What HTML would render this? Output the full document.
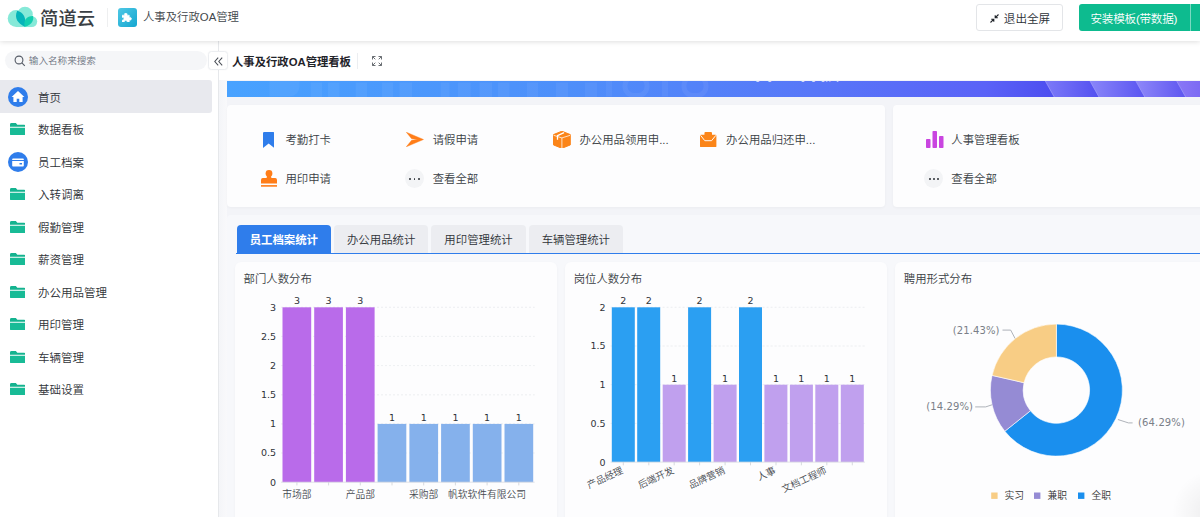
<!DOCTYPE html>
<html lang="zh-CN">
<head>
<meta charset="utf-8">
<title>人事及行政OA管理</title>
<style>
*{box-sizing:border-box;margin:0;padding:0}
html,body{width:1200px;height:517px;overflow:hidden;background:#fff}
body{font-family:"Liberation Sans","Noto Sans CJK SC",sans-serif;color:#333;font-size:11.4px;position:relative;font-weight:350}
.abs{position:absolute}
#header{position:absolute;left:0;top:0;width:1200px;height:41px;background:#fff;box-shadow:0 1px 5px rgba(0,0,0,.13);z-index:10}
#logo-text{position:absolute;left:40px;top:6px;font-size:18.3px;line-height:26px;color:#3a3f45;letter-spacing:.1px;font-weight:500}
#hdiv{position:absolute;left:107px;top:8px;width:1px;height:19px;background:#eeeff0}
#appicon{position:absolute;left:117.500px;top:7.900px;width:19.500px;height:19.500px;border-radius:3px;background:linear-gradient(135deg,#4fc8e5,#14a6d0)}
#apptitle{position:absolute;left:143px;top:8.400px;line-height:19px;font-size:11.375px;color:#41464b}
#btn-exit{position:absolute;left:976px;top:4px;width:87px;height:27px;border:1px solid #e3e5e8;border-radius:3px;background:#fff;font-size:11.6px;line-height:25px;color:#2b2f36}
#btn-exit span{position:absolute;left:26.800px;top:.5px}
#btn-install{position:absolute;left:1079px;top:4px;width:125px;height:27px;border-radius:3px;background:#0dbb8f;color:#fff;font-size:11.6px;line-height:27px}
#btn-install span{position:absolute;left:11.500px;top:.5px;letter-spacing:-.25px}
#btn-install i{position:absolute;left:111px;top:0;width:1px;height:27px;background:rgba(255,255,255,.45)}
#sidebar{position:absolute;left:0;top:41px;width:219px;height:476px;background:#fff;border-right:1px solid #e6e8eb}
#search{position:absolute;left:5px;top:10px;width:202.200px;height:19px;border-radius:10px;background:#f5f6f8}
#search span{position:absolute;left:23.800px;top:0;line-height:19px;font-size:9.6px;color:#6b7280}
#collapse{position:absolute;left:208.400px;top:50.900px;width:19.300px;height:19.500px;border:1px solid #eceef1;border-radius:3.500px;box-shadow:0 0 2px rgba(0,0,0,.04);background:#fff;z-index:5}
.mi{position:absolute;left:0;width:211.5px;height:32.2px;border-radius:0 3px 3px 0}
.mi.sel{background:#e8e9ee}
.mi span{position:absolute;left:38px;top:1.600px;line-height:32.2px;font-size:11.5px;color:#2f3338;white-space:nowrap}
.mi svg{position:absolute}
#main{position:absolute;left:219px;top:41px;width:981px;height:476px;background:#f3f4f8}
#titlebar{position:absolute;left:0;top:0;width:981px;height:39px;background:#fff}
#titlebar b{position:absolute;left:13px;top:11.100px;line-height:20px;font-size:11.33px;color:#1f2329;font-weight:700;white-space:nowrap}
#banner{position:absolute;left:8px;top:39.500px;width:973px;height:16.500px;background:linear-gradient(90deg,#48a2ff 0%,#4e8ffa 35%,#5877f8 60%,#5a62f7 78%,#4e4ff0 84.5%,#4e4ff0 100%);overflow:hidden}
.card{position:absolute;background:#fdfdfe;border-radius:4px;box-shadow:0 1px 3px rgba(0,0,0,.035)}
.ent{position:absolute;font-size:11.4px;line-height:16px;color:#3a3f45;white-space:nowrap}
.ico{position:absolute}
.dots{position:absolute;width:19px;height:19px;border-radius:50%;background:#f3f4f6}
.dots i{position:absolute;top:8.600px;width:1.900px;height:1.900px;border-radius:50%;background:#2b2f36}
#tabwrap{position:absolute;left:8px;top:173.500px;width:980px;height:310px;background:#f7f8fb;border-radius:4px}
.tab{position:absolute;top:10.500px;height:27.500px;width:94.300px;border-radius:4px 4px 0 0;background:#ecedf1;font-size:11.4px;line-height:27px;padding-top:1.900px;text-align:center;color:#2f3338;white-space:nowrap}
.tab.on{background:#2f7deb;color:#fff;font-weight:700}
#tabline{position:absolute;left:9px;top:38px;width:980px;height:1.600px;background:#2f7deb}
.ctitle{position:absolute;left:8.500px;top:9px;font-size:11.4px;line-height:16px;color:#3a3f45;white-space:nowrap}
svg text{font-family:"Liberation Sans","Noto Sans CJK SC",sans-serif}
svg text.num{font-family:"DejaVu Sans","Liberation Sans",sans-serif;font-weight:400}
</style>
</head>
<body>
<div id="header">
  <svg class="abs" style="left:7px;top:6px" width="32" height="22" viewBox="7 6 32 22">
    <circle cx="16.200" cy="18.600" r="8.500" fill="#86e9d8"/>
    <circle cx="25" cy="14.600" r="7.800" fill="#86e9d8"/>
    <circle cx="31.800" cy="21.600" r="5.400" fill="#86e9d8"/>
    <rect x="16.200" y="19" width="15.600" height="8.050" fill="#86e9d8"/>
    <path d="M17.200 10.800C23 12 26.800 17.500 25 26.800C18 23.800 13.800 18.300 17.200 10.800Z" fill="#05b4b9"/>
    <path d="M33.100 16C34.200 21.500 30.300 25.500 24.800 26.800C23 20.500 26.800 15.800 33.100 16Z" fill="#12cfb0"/>
  </svg>
  <div id="logo-text">简道云</div>
  <div id="hdiv"></div>
  <div id="appicon">
    <svg class="abs" style="left:4.900px;top:4.900px" width="9.500" height="9.300" viewBox="1 -0.05 9.85 9.65" preserveAspectRatio="none"><path d="M1 2.200H3.600A1.500 1.500 0 1 1 6.200 2.200H8.600V4.600A1.500 1.500 0 1 1 8.600 7.200V9.600H6.200A1.400 1.400 0 1 0 3.600 9.600H1V7.200A1.400 1.400 0 1 0 1 4.600z" fill="#fff" stroke="#fff" stroke-width=".5" stroke-linejoin="round"/></svg>
  </div>
  <div id="apptitle">人事及行政OA管理</div>
  <div id="btn-exit">
    <svg class="abs" style="left:13px;top:9px" width="9" height="9" viewBox="0 0 9 9"><path d="M8.5 .5 5.4 3.6M5.2 1.2v2.6h2.6M.5 8.500 3.600 5.400M3.800 7.800V5.200H1.200" stroke="#1f2329" stroke-width="1.1" fill="none"/></svg>
    <span>退出全屏</span>
  </div>
  <div id="btn-install"><span>安装模板(带数据)</span><i></i></div>
</div>
<div id="sidebar">
  <div id="search">
    <svg class="abs" style="left:9px;top:4px" width="12" height="12" viewBox="0 0 12 12"><circle cx="5" cy="5" r="3.9" stroke="#555b66" stroke-width="1.1" fill="none"/><path d="M7.900 7.900 10.800 10.800" stroke="#555b66" stroke-width="1.1"/></svg>
    <span>输入名称来搜索</span>
  </div>
  <div class="mi sel" style="top:39.4px"><svg style="left:7.700px;top:6.200px" width="20" height="20" viewBox="0 0 20 20"><circle cx="10" cy="10" r="10" fill="#2f7deb"/><path d="M10 4 3.600 10h1.800v5h3.300v-3.300h2.600V15h3.300V10h1.800z" fill="#fff"/></svg><span>首页</span></div>
  <div class="mi" style="top:71.9px"><svg style="left:9.600px;top:10.200px" width="15.600" height="12.300" viewBox="0 0 16 13" preserveAspectRatio="none"><path d="M0 1.500A1.500 1.500 0 0 1 1.500 0H6l1.500 1.800H14.500A1.500 1.500 0 0 1 16 3.300V4H0z" fill="#14b38f"/><path d="M0 5H16V11.500A1.500 1.500 0 0 1 14.500 13H1.500A1.500 1.500 0 0 1 0 11.500z" fill="#18bb96"/></svg><span>数据看板</span></div>
  <div class="mi" style="top:104.4px"><svg style="left:7.700px;top:6.200px" width="20" height="20" viewBox="0 0 20 20"><circle cx="10" cy="10" r="10" fill="#2f7deb"/><path d="M5 6.500h10a.8.800 0 0 1 .8.800V8H4.200V7.300A.8.800 0 0 1 5 6.500zM4.200 9h11.600v4.700a.8.800 0 0 1-.8.800H5a.8.800 0 0 1-.8-.8zM11.500 11h2.500v1.500h-2.500z" fill="#fff" fill-rule="evenodd"/></svg><span>员工档案</span></div>
  <div class="mi" style="top:136.9px"><svg style="left:9.600px;top:10.200px" width="15.600" height="12.300" viewBox="0 0 16 13" preserveAspectRatio="none"><path d="M0 1.500A1.500 1.500 0 0 1 1.500 0H6l1.500 1.800H14.500A1.500 1.500 0 0 1 16 3.300V4H0z" fill="#14b38f"/><path d="M0 5H16V11.500A1.500 1.500 0 0 1 14.500 13H1.500A1.500 1.500 0 0 1 0 11.500z" fill="#18bb96"/></svg><span>入转调离</span></div>
  <div class="mi" style="top:169.4px"><svg style="left:9.600px;top:10.200px" width="15.600" height="12.300" viewBox="0 0 16 13" preserveAspectRatio="none"><path d="M0 1.500A1.500 1.500 0 0 1 1.500 0H6l1.500 1.800H14.500A1.500 1.500 0 0 1 16 3.300V4H0z" fill="#14b38f"/><path d="M0 5H16V11.500A1.500 1.500 0 0 1 14.500 13H1.500A1.500 1.500 0 0 1 0 11.500z" fill="#18bb96"/></svg><span>假勤管理</span></div>
  <div class="mi" style="top:201.9px"><svg style="left:9.600px;top:10.200px" width="15.600" height="12.300" viewBox="0 0 16 13" preserveAspectRatio="none"><path d="M0 1.500A1.500 1.500 0 0 1 1.500 0H6l1.500 1.800H14.500A1.500 1.500 0 0 1 16 3.300V4H0z" fill="#14b38f"/><path d="M0 5H16V11.500A1.500 1.500 0 0 1 14.500 13H1.500A1.500 1.500 0 0 1 0 11.500z" fill="#18bb96"/></svg><span>薪资管理</span></div>
  <div class="mi" style="top:234.4px"><svg style="left:9.600px;top:10.200px" width="15.600" height="12.300" viewBox="0 0 16 13" preserveAspectRatio="none"><path d="M0 1.500A1.500 1.500 0 0 1 1.500 0H6l1.500 1.800H14.500A1.500 1.500 0 0 1 16 3.300V4H0z" fill="#14b38f"/><path d="M0 5H16V11.500A1.500 1.500 0 0 1 14.500 13H1.500A1.500 1.500 0 0 1 0 11.500z" fill="#18bb96"/></svg><span>办公用品管理</span></div>
  <div class="mi" style="top:266.9px"><svg style="left:9.600px;top:10.200px" width="15.600" height="12.300" viewBox="0 0 16 13" preserveAspectRatio="none"><path d="M0 1.500A1.500 1.500 0 0 1 1.500 0H6l1.500 1.800H14.500A1.500 1.500 0 0 1 16 3.300V4H0z" fill="#14b38f"/><path d="M0 5H16V11.500A1.500 1.500 0 0 1 14.500 13H1.500A1.500 1.500 0 0 1 0 11.500z" fill="#18bb96"/></svg><span>用印管理</span></div>
  <div class="mi" style="top:299.4px"><svg style="left:9.600px;top:10.200px" width="15.600" height="12.300" viewBox="0 0 16 13" preserveAspectRatio="none"><path d="M0 1.500A1.500 1.500 0 0 1 1.500 0H6l1.500 1.800H14.500A1.500 1.500 0 0 1 16 3.300V4H0z" fill="#14b38f"/><path d="M0 5H16V11.500A1.500 1.500 0 0 1 14.500 13H1.500A1.500 1.500 0 0 1 0 11.500z" fill="#18bb96"/></svg><span>车辆管理</span></div>
  <div class="mi" style="top:331.9px"><svg style="left:9.600px;top:10.200px" width="15.600" height="12.300" viewBox="0 0 16 13" preserveAspectRatio="none"><path d="M0 1.500A1.500 1.500 0 0 1 1.500 0H6l1.500 1.800H14.500A1.500 1.500 0 0 1 16 3.300V4H0z" fill="#14b38f"/><path d="M0 5H16V11.500A1.500 1.500 0 0 1 14.500 13H1.500A1.500 1.500 0 0 1 0 11.500z" fill="#18bb96"/></svg><span>基础设置</span></div>
</div>
<div id="collapse"><svg class="abs" style="left:4.600px;top:4.700px" width="9" height="9" viewBox="0 0 9 9"><path d="M4.200 .7 .8 4.500 4.200 8.300M8.200 .7 4.800 4.500 8.200 8.300" stroke="#4a4f57" stroke-width="1.05" fill="none"/></svg></div>
<div id="main">
  <div id="titlebar"><b>人事及行政OA管理看板</b>
    <svg class="abs" style="left:153px;top:15px" width="10" height="10" viewBox="0 0 10 10"><path d="M.5 3.500V.5h3M6.500 .5h3v3M9.500 6.500v3h-3M3.500 9.500h-3v-3M.8.800 3.300 3.300M9.200.8 6.700 3.300M9.200 9.200 6.700 6.700M.8 9.200 3.300 6.700" stroke="#3a3f45" stroke-width=".75" fill="none"/></svg>
    <i class="abs" style="left:138px;top:12.300px;width:1px;height:16px;background:#eceef1"></i>
  </div>
  <div class="abs" style="left:0;top:39px;width:8px;height:437px;background:linear-gradient(90deg,#f4f5f8,#f9f9fb)"></div>
  <div id="banner">
    <svg class="abs" style="left:0;top:0" width="973" height="17" viewBox="227 80.5 973 17">
      <defs>
        <linearGradient id="sg0" x1="0" y1="0" x2="1" y2="0"><stop offset="0" stop-color="#7d7af8"/><stop offset="1" stop-color="#524ff0"/></linearGradient>
        <linearGradient id="sg1" x1="0" y1="0" x2="1" y2="0"><stop offset="0" stop-color="#8a86f9"/><stop offset="1" stop-color="#5954f1"/></linearGradient>
        <linearGradient id="sg2" x1="0" y1="0" x2="1" y2="0"><stop offset="0" stop-color="#8f88f9"/><stop offset="1" stop-color="#5d55f0"/></linearGradient>
        <linearGradient id="sg3" x1="0" y1="0" x2="1" y2="0"><stop offset="0" stop-color="#8a78f6"/><stop offset="1" stop-color="#6a58f0"/></linearGradient>
      </defs>
      <polygon points="1045.3,80.5 1090,80.5 1099.5,97.5 1054.8,97.5" fill="url(#sg0)"/>
      <line x1="1045.3" y1="80.5" x2="1054.8" y2="97.5" stroke="#a9a6fb" stroke-width=".9" opacity=".7"/>
      <polygon points="1090,80.5 1135.8,80.5 1145.3,97.5 1099.5,97.5" fill="url(#sg1)"/>
      <line x1="1090" y1="80.5" x2="1099.5" y2="97.5" stroke="#a9a6fb" stroke-width=".9" opacity=".7"/>
      <polygon points="1135.8,80.5 1176.7,80.5 1186.2,97.5 1145.3,97.5" fill="url(#sg2)"/>
      <line x1="1135.8" y1="80.5" x2="1145.3" y2="97.5" stroke="#a9a6fb" stroke-width=".9" opacity=".7"/>
      <polygon points="1176.7,80.5 1222,80.5 1231.5,97.5 1186.2,97.5" fill="url(#sg3)"/>
      <line x1="1176.7" y1="80.5" x2="1186.2" y2="97.5" stroke="#a9a6fb" stroke-width=".9" opacity=".7"/>
      <rect x="310.7" y="82" width="11.3" height="16" fill="#fff" opacity=".05"/>
      <rect x="328" y="82" width="11.5" height="16" fill="#fff" opacity=".05"/>
      <rect x="355.7" y="82" width="11.3" height="16" fill="#fff" opacity=".05"/>
      <rect x="382" y="82" width="11.0" height="16" fill="#fff" opacity=".05"/>
      <rect x="399.5" y="82" width="12.5" height="16" fill="#fff" opacity=".05"/>
      <rect x="440.7" y="82" width="8.8" height="16" fill="#fff" opacity=".05"/>
      <rect x="458" y="82" width="12.7" height="16" fill="#fff" opacity=".05"/>
      <rect x="479.5" y="82" width="12.5" height="16" fill="#fff" opacity=".05"/>
      <rect x="498" y="82" width="11.5" height="16" fill="#fff" opacity=".05"/>
      <rect x="527" y="82" width="11.0" height="16" fill="#fff" opacity=".05"/>
      <rect x="556" y="82" width="12.0" height="16" fill="#fff" opacity=".05"/>
      <rect x="585" y="82" width="12.0" height="16" fill="#fff" opacity=".05"/>
      <path d="M269.500 80.500H299.500V86A10 10 0 0 1 289.500 96H269.500z" fill="#fff" opacity=".05"/>
      <rect x="625" y="76" width="22" height="19" rx="9" fill="none" stroke="#fff" stroke-width="5" opacity=".06"/>
      <rect x="684" y="76" width="22" height="19" rx="9" fill="none" stroke="#fff" stroke-width="5" opacity=".06"/>
      <rect x="606" y="80" width="6" height="16" fill="#fff" opacity=".05"/>
      <rect x="662" y="80" width="6" height="16" fill="#fff" opacity=".05"/>
    </svg>
    <div class="abs" style="left:525px;top:-19.800px;font-size:22px;line-height:22px;font-weight:700;color:#fff;opacity:.85;white-space:nowrap">管理看板</div>
  </div>
  <div class="card" style="left:8px;top:64px;width:657.500px;height:101.600px">
    <svg class="ico" style="left:36px;top:26.599999999999994px" width="11.300" height="16.400" viewBox="0 0 12 17" preserveAspectRatio="none"><path d="M0 1.200A1.200 1.200 0 0 1 1.200 0h9.600A1.200 1.200 0 0 1 12 1.200V16.500L6 11.800 0 16.500z" fill="#2f7deb"/></svg>
    <div class="ent" style="left:58.4px;top:26.6px">考勤打卡</div>
    <svg class="ico" style="left:178.7px;top:27.399999999999995px" width="18" height="15" viewBox="0 0 18 15"><path d="M.3 .2 17.500 7.500 .3 14.800 5.600 8.300 11.500 7.500 5.600 6.700z" fill="#ff7d18" stroke="#ff7d18" stroke-width=".4" stroke-linejoin="round"/></svg>
    <div class="ent" style="left:205.7px;top:26.6px">请假申请</div>
    <svg class="ico" style="left:325.85px;top:25.80000000000001px" width="17.800" height="17.500" viewBox="0 0 17.800 17.500"><path d="M8.900 .2 17.300 3.600V13.900L8.900 17.300 .5 13.900V3.600z" fill="#fb8519" stroke="#fb8519" stroke-width="1" stroke-linejoin="round"/><path d="M.6 4.300 8.900 6.900 17.200 4.300M8.900 6.900V17.300" stroke="#fff" stroke-width=".75" fill="none"/><path d="M11 1.600 4.500 4.700V8.700" stroke="#fff" stroke-width="1.300" fill="none" stroke-linejoin="round"/></svg>
    <div class="ent" style="left:352.4px;top:26.6px">办公用品领用申...</div>
    <svg class="ico" style="left:473.35px;top:27px" width="16.400" height="15.200" viewBox="0 0 16.400 15.200"><path d="M0 3.800A1 1 0 0 1 1 2.800H4.450V1A1 1 0 0 1 5.450 0H11A1 1 0 0 1 12 1V2.800H15.400A1 1 0 0 1 16.400 3.800V14.200A1 1 0 0 1 15.400 15.200H1A1 1 0 0 1 0 14.200z" fill="#fb8519"/><path d="M.5 3.300 4.800 8.700H11.600L15.900 3.300" stroke="#fff" stroke-width=".95" fill="none" stroke-linejoin="round"/></svg>
    <div class="ent" style="left:499.1px;top:26.6px">办公用品归还申...</div>
    <svg class="ico" style="left:33.5px;top:64.6px" width="16" height="17" viewBox="0 0 16 17"><circle cx="8" cy="3.400" r="3.400" fill="#ff7d18"/><path d="M6.200 5h3.600l.6 3h3.800A2 2 0 0 1 16 10V13.500H0V10A2 2 0 0 1 1.800 8H5.600z" fill="#ff7d18"/><rect x="0" y="15.100" width="16" height="1.600" fill="#ff7d18"/></svg>
    <div class="ent" style="left:58.4px;top:65.6px">用印申请</div>
    <div class="dots" style="left:178px;top:64.1px"><i style="left:4.300px"></i><i style="left:8.600px"></i><i style="left:12.900px"></i></div>
    <div class="ent" style="left:205.7px;top:65.6px">查看全部</div>
  </div>
  <div class="card" style="left:673.700px;top:64px;width:320px;height:101.600px">
    <svg class="ico" style="left:32.89999999999998px;top:25.599999999999994px" width="18" height="17" viewBox="0 0 18 17"><rect x="0" y="8" width="4.500" height="9" rx=".8" fill="#c945e0"/><rect x="6.500" y="0" width="4.500" height="17" rx=".8" fill="#c945e0"/><rect x="13" y="5" width="4.500" height="12" rx=".8" fill="#c945e0"/></svg>
    <div class="ent" style="left:58.6px;top:26.6px">人事管理看板</div>
    <div class="dots" style="left:31.799999999999955px;top:64.1px"><i style="left:4.300px"></i><i style="left:8.600px"></i><i style="left:12.900px"></i></div>
    <div class="ent" style="left:58.6px;top:65.6px">查看全部</div>
  </div>
  <div id="tabwrap">
    <div class="tab on" style="left:9.7px">员工档案统计</div>
    <div class="tab" style="left:107.0px">办公用品统计</div>
    <div class="tab" style="left:204.4px">用印管理统计</div>
    <div class="tab" style="left:301.7px">车辆管理统计</div>
    <div id="tabline"></div>
    <div class="card" style="left:8.0px;top:47.6px;width:321.8px;height:270px;border-radius:6px">
      <div class="ctitle">部门人数分布</div>
      <svg class="abs" style="left:0;top:0" width="321" height="256" viewBox="235 262.1 321 256">
        <text x="276.0" y="485.8" font-size="9.5" class="num" fill="#30343a" text-anchor="end">0</text>
        <line x1="281" y1="453.1" x2="534.7" y2="453.1" stroke="#e9ebee" stroke-width=".8" stroke-dasharray="2 2"/>
        <text x="276.0" y="456.6" font-size="9.5" class="num" fill="#30343a" text-anchor="end">0.5</text>
        <line x1="281" y1="424.0" x2="534.7" y2="424.0" stroke="#e9ebee" stroke-width=".8" stroke-dasharray="2 2"/>
        <text x="276.0" y="427.5" font-size="9.5" class="num" fill="#30343a" text-anchor="end">1</text>
        <line x1="281" y1="394.9" x2="534.7" y2="394.9" stroke="#e9ebee" stroke-width=".8" stroke-dasharray="2 2"/>
        <text x="276.0" y="398.4" font-size="9.5" class="num" fill="#30343a" text-anchor="end">1.5</text>
        <line x1="281" y1="365.7" x2="534.7" y2="365.7" stroke="#e9ebee" stroke-width=".8" stroke-dasharray="2 2"/>
        <text x="276.0" y="369.2" font-size="9.5" class="num" fill="#30343a" text-anchor="end">2</text>
        <line x1="281" y1="336.5" x2="534.7" y2="336.5" stroke="#e9ebee" stroke-width=".8" stroke-dasharray="2 2"/>
        <text x="276.0" y="340.0" font-size="9.5" class="num" fill="#30343a" text-anchor="end">2.5</text>
        <line x1="281" y1="307.4" x2="534.7" y2="307.4" stroke="#e9ebee" stroke-width=".8" stroke-dasharray="2 2"/>
        <text x="276.0" y="310.9" font-size="9.5" class="num" fill="#30343a" text-anchor="end">3</text>
        <rect x="282.5" y="307.4" width="28.7" height="174.9" fill="#b96bea"/>
        <text x="296.9" y="304.5" font-size="9.5" class="num" fill="#30343a" text-anchor="middle">3</text>
        <rect x="314.2" y="307.4" width="28.7" height="174.9" fill="#b96bea"/>
        <text x="328.6" y="304.5" font-size="9.5" class="num" fill="#30343a" text-anchor="middle">3</text>
        <rect x="345.9" y="307.4" width="28.7" height="174.9" fill="#b96bea"/>
        <text x="360.3" y="304.5" font-size="9.5" class="num" fill="#30343a" text-anchor="middle">3</text>
        <rect x="377.6" y="424.0" width="28.7" height="58.3" fill="#85b1ec"/>
        <text x="392.0" y="421.1" font-size="9.5" class="num" fill="#30343a" text-anchor="middle">1</text>
        <rect x="409.4" y="424.0" width="28.7" height="58.3" fill="#85b1ec"/>
        <text x="423.7" y="421.1" font-size="9.5" class="num" fill="#30343a" text-anchor="middle">1</text>
        <rect x="441.1" y="424.0" width="28.7" height="58.3" fill="#85b1ec"/>
        <text x="455.4" y="421.1" font-size="9.5" class="num" fill="#30343a" text-anchor="middle">1</text>
        <rect x="472.8" y="424.0" width="28.7" height="58.3" fill="#85b1ec"/>
        <text x="487.1" y="421.1" font-size="9.5" class="num" fill="#30343a" text-anchor="middle">1</text>
        <rect x="504.5" y="424.0" width="28.7" height="58.3" fill="#85b1ec"/>
        <text x="518.8" y="421.1" font-size="9.5" class="num" fill="#30343a" text-anchor="middle">1</text>
        <line x1="281" y1="482.3" x2="534.7" y2="482.3" stroke="#d9dce1" stroke-width=".8"/>
        <line x1="296.9" y1="482.3" x2="296.9" y2="485.5" stroke="#cdd0d6" stroke-width=".8"/>
        <line x1="328.6" y1="482.3" x2="328.6" y2="485.5" stroke="#cdd0d6" stroke-width=".8"/>
        <line x1="360.3" y1="482.3" x2="360.3" y2="485.5" stroke="#cdd0d6" stroke-width=".8"/>
        <line x1="392.0" y1="482.3" x2="392.0" y2="485.5" stroke="#cdd0d6" stroke-width=".8"/>
        <line x1="423.7" y1="482.3" x2="423.7" y2="485.5" stroke="#cdd0d6" stroke-width=".8"/>
        <line x1="455.4" y1="482.3" x2="455.4" y2="485.5" stroke="#cdd0d6" stroke-width=".8"/>
        <line x1="487.1" y1="482.3" x2="487.1" y2="485.5" stroke="#cdd0d6" stroke-width=".8"/>
        <line x1="518.8" y1="482.3" x2="518.8" y2="485.5" stroke="#cdd0d6" stroke-width=".8"/>
        <text x="296.9" y="498.6" font-size="9.75" fill="#464a50" text-anchor="middle">市场部</text>
        <text x="360.3" y="498.6" font-size="9.75" fill="#464a50" text-anchor="middle">产品部</text>
        <text x="423.7" y="498.6" font-size="9.75" fill="#464a50" text-anchor="middle">采购部</text>
        <text x="487.1" y="498.6" font-size="9.75" fill="#464a50" text-anchor="middle">帆软软件有限公司</text>
      </svg>
    </div>
    <div class="card" style="left:338.2px;top:47.6px;width:321.8px;height:270px;border-radius:6px">
      <div class="ctitle">岗位人数分布</div>
      <svg class="abs" style="left:0;top:0" width="321" height="256" viewBox="565.2 262.1 321 256">
        <text x="605.8" y="465.7" font-size="9.5" class="num" fill="#30343a" text-anchor="end">0</text>
        <line x1="610.8" y1="423.5" x2="865.2" y2="423.5" stroke="#e9ebee" stroke-width=".8" stroke-dasharray="2 2"/>
        <text x="605.8" y="427.0" font-size="9.5" class="num" fill="#30343a" text-anchor="end">0.5</text>
        <line x1="610.8" y1="384.8" x2="865.2" y2="384.8" stroke="#e9ebee" stroke-width=".8" stroke-dasharray="2 2"/>
        <text x="605.8" y="388.3" font-size="9.5" class="num" fill="#30343a" text-anchor="end">1</text>
        <line x1="610.8" y1="346.1" x2="865.2" y2="346.1" stroke="#e9ebee" stroke-width=".8" stroke-dasharray="2 2"/>
        <text x="605.8" y="349.6" font-size="9.5" class="num" fill="#30343a" text-anchor="end">1.5</text>
        <line x1="610.8" y1="307.4" x2="865.2" y2="307.4" stroke="#e9ebee" stroke-width=".8" stroke-dasharray="2 2"/>
        <text x="605.8" y="310.9" font-size="9.5" class="num" fill="#30343a" text-anchor="end">2</text>
        <rect x="612.0" y="307.4" width="23.0" height="154.8" fill="#2b9ff2"/>
        <text x="623.5" y="304.5" font-size="9.5" class="num" fill="#30343a" text-anchor="middle">2</text>
        <rect x="637.4" y="307.4" width="23.0" height="154.8" fill="#2b9ff2"/>
        <text x="649.0" y="304.5" font-size="9.5" class="num" fill="#30343a" text-anchor="middle">2</text>
        <rect x="662.9" y="384.8" width="23.0" height="77.4" fill="#c0a0ee"/>
        <text x="674.4" y="381.9" font-size="9.5" class="num" fill="#30343a" text-anchor="middle">1</text>
        <rect x="688.3" y="307.4" width="23.0" height="154.8" fill="#2b9ff2"/>
        <text x="699.8" y="304.5" font-size="9.5" class="num" fill="#30343a" text-anchor="middle">2</text>
        <rect x="713.8" y="384.8" width="23.0" height="77.4" fill="#c0a0ee"/>
        <text x="725.3" y="381.9" font-size="9.5" class="num" fill="#30343a" text-anchor="middle">1</text>
        <rect x="739.2" y="307.4" width="23.0" height="154.8" fill="#2b9ff2"/>
        <text x="750.7" y="304.5" font-size="9.5" class="num" fill="#30343a" text-anchor="middle">2</text>
        <rect x="764.6" y="384.8" width="23.0" height="77.4" fill="#c0a0ee"/>
        <text x="776.2" y="381.9" font-size="9.5" class="num" fill="#30343a" text-anchor="middle">1</text>
        <rect x="790.1" y="384.8" width="23.0" height="77.4" fill="#c0a0ee"/>
        <text x="801.6" y="381.9" font-size="9.5" class="num" fill="#30343a" text-anchor="middle">1</text>
        <rect x="815.5" y="384.8" width="23.0" height="77.4" fill="#c0a0ee"/>
        <text x="827.0" y="381.9" font-size="9.5" class="num" fill="#30343a" text-anchor="middle">1</text>
        <rect x="841.0" y="384.8" width="23.0" height="77.4" fill="#c0a0ee"/>
        <text x="852.5" y="381.9" font-size="9.5" class="num" fill="#30343a" text-anchor="middle">1</text>
        <line x1="610.8" y1="462.2" x2="865.2" y2="462.2" stroke="#d9dce1" stroke-width=".8"/>
        <line x1="623.5" y1="462.2" x2="623.5" y2="465.4" stroke="#cdd0d6" stroke-width=".8"/>
        <line x1="649.0" y1="462.2" x2="649.0" y2="465.4" stroke="#cdd0d6" stroke-width=".8"/>
        <line x1="674.4" y1="462.2" x2="674.4" y2="465.4" stroke="#cdd0d6" stroke-width=".8"/>
        <line x1="699.8" y1="462.2" x2="699.8" y2="465.4" stroke="#cdd0d6" stroke-width=".8"/>
        <line x1="725.3" y1="462.2" x2="725.3" y2="465.4" stroke="#cdd0d6" stroke-width=".8"/>
        <line x1="750.7" y1="462.2" x2="750.7" y2="465.4" stroke="#cdd0d6" stroke-width=".8"/>
        <line x1="776.2" y1="462.2" x2="776.2" y2="465.4" stroke="#cdd0d6" stroke-width=".8"/>
        <line x1="801.6" y1="462.2" x2="801.6" y2="465.4" stroke="#cdd0d6" stroke-width=".8"/>
        <line x1="827.0" y1="462.2" x2="827.0" y2="465.4" stroke="#cdd0d6" stroke-width=".8"/>
        <line x1="852.5" y1="462.2" x2="852.5" y2="465.4" stroke="#cdd0d6" stroke-width=".8"/>
        <text transform="translate(624.0,472.7) rotate(-25)" font-size="9.6" fill="#464a50" text-anchor="end">产品经理</text>
        <text transform="translate(674.9,472.7) rotate(-25)" font-size="9.6" fill="#464a50" text-anchor="end">后端开发</text>
        <text transform="translate(725.8,472.7) rotate(-25)" font-size="9.6" fill="#464a50" text-anchor="end">品牌营销</text>
        <text transform="translate(776.7,472.7) rotate(-25)" font-size="9.6" fill="#464a50" text-anchor="end">人事</text>
        <text transform="translate(827.5,472.7) rotate(-25)" font-size="9.6" fill="#464a50" text-anchor="end">文档工程师</text>
      </svg>
    </div>
    <div class="card" style="left:668.3px;top:47.6px;width:321.8px;height:270px;border-radius:6px">
      <div class="ctitle">聘用形式分布</div>
      <svg class="abs" style="left:0;top:0" width="321" height="256" viewBox="895.3 262.1 321 256">
        <path d="M1056.70 324.20A66 66 0 1 1 1005.10 431.36L1030.75 410.90A33.2 33.2 0 1 0 1056.70 357.00Z" fill="#1a8fee" stroke="#fff" stroke-width=".6"/>
        <path d="M1005.10 431.36A66 66 0 0 1 992.36 375.51L1024.33 382.81A33.2 33.2 0 0 0 1030.75 410.90Z" fill="#958bd4" stroke="#fff" stroke-width=".6"/>
        <path d="M992.36 375.51A66 66 0 0 1 1056.70 324.20L1056.70 357.00A33.2 33.2 0 0 0 1024.33 382.81Z" fill="#f8cd85" stroke="#fff" stroke-width=".6"/>
        <path d="M1015.4 338.6 1011 330.2H1002.8M992.3 404.9 986 407H975.5M1118.2 419.6 1128.7 423H1132.9" stroke="#9aa0a8" stroke-width=".8" fill="none"/>
        <text x="999.9" y="333.8" text-anchor="end" class="num" font-size="10" letter-spacing=".12" fill="#7a7f88">(21.43%)</text>
        <text x="973.4" y="410.6" text-anchor="end" class="num" font-size="10" letter-spacing=".12" fill="#7a7f88">(14.29%)</text>
        <text x="1138.4" y="426.1" class="num" font-size="10" letter-spacing=".12" fill="#7a7f88">(64.29%)</text>
        <rect x="991.5" y="492.6" width="6.4" height="6.4" fill="#f8cd85"/>
        <text x="1004.9" y="499.6" font-size="9.75" fill="#333">实习</text>
        <rect x="1034.3" y="492.6" width="6.4" height="6.4" fill="#958bd4"/>
        <text x="1047.7" y="499.6" font-size="9.75" fill="#333">兼职</text>
        <rect x="1078.3" y="492.6" width="6.4" height="6.4" fill="#1a8fee"/>
        <text x="1091.7" y="499.6" font-size="9.75" fill="#333">全职</text>
      </svg>
    </div>
  </div>
</div>
<div class="abs" style="left:1150px;top:450px;width:50px;height:67px;background:radial-gradient(circle at 64px 62px,rgba(0,0,0,.07) 0,rgba(0,0,0,.03) 22px,rgba(0,0,0,0) 42px);z-index:20"></div>
</body>
</html>
